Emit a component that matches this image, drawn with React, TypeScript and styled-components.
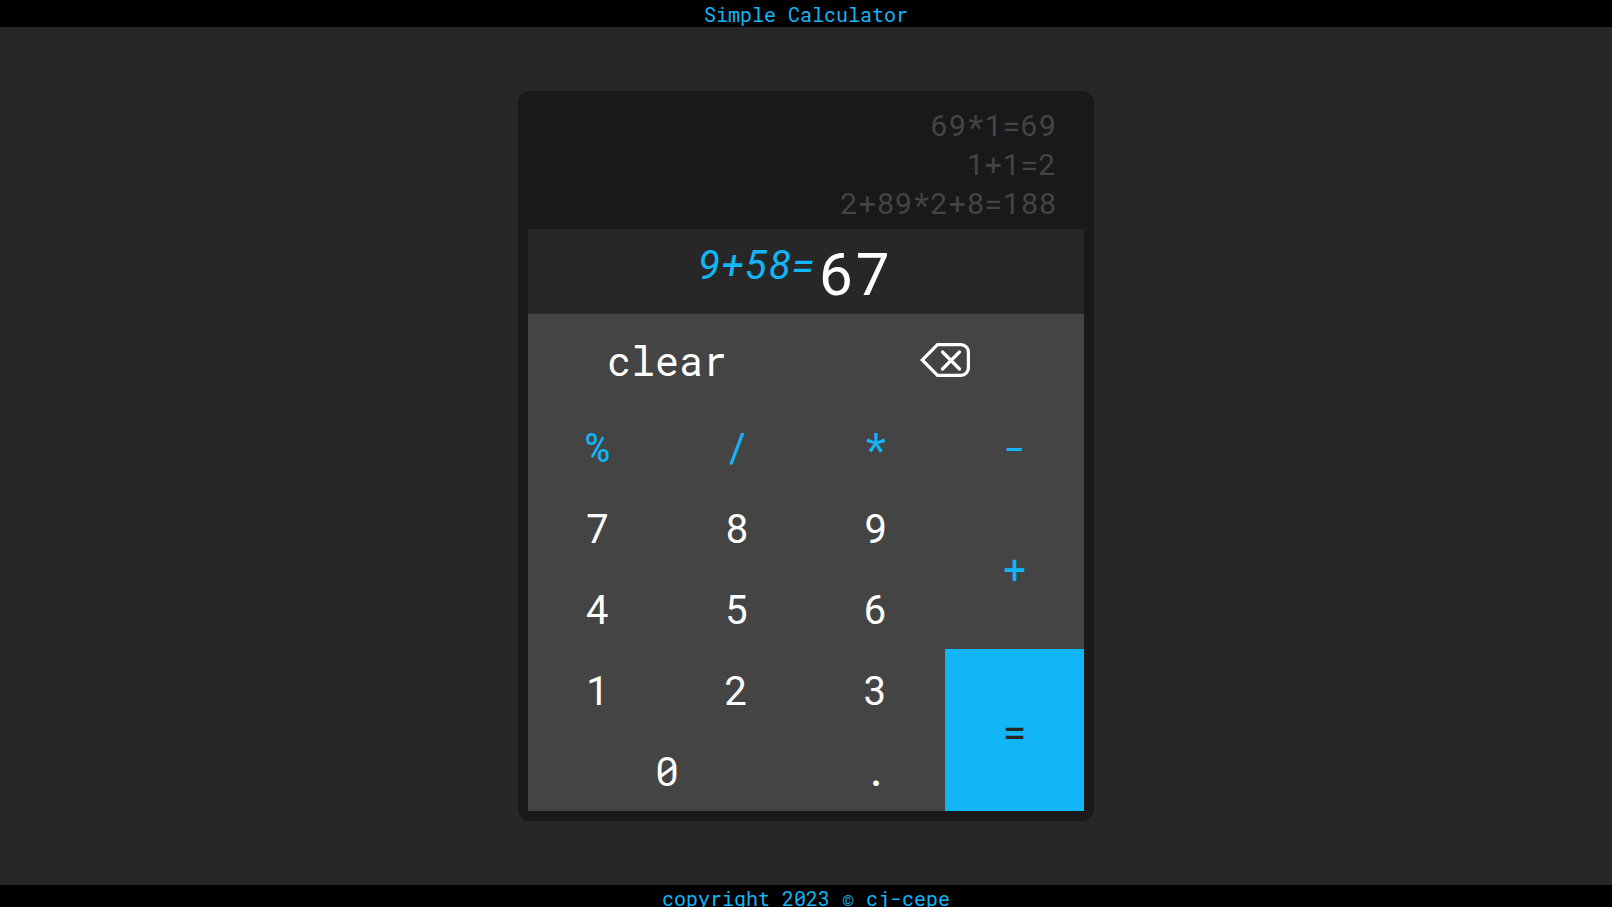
import React, { useState } from "react";
import styled, { createGlobalStyle } from "styled-components";

const GlobalStyle = createGlobalStyle`
  * { box-sizing: border-box; }
  html { scrollbar-width: none; }
  body {
    margin: 0;
    background: #272727;
    color: #fff;
    font-family: "Roboto Mono", Roboto, "Liberation Mono", monospace;
  }
`;

const Bar = styled.div`
  height: 27px;
  background: #000;
  color: #12b5f5;
  text-align: center;
  font-size: 20px;
  line-height: 27px;
`;

const Title = styled.h1`
  margin: 0;
  font: inherit;
  line-height: 28px;
`;

const Main = styled.main`
  display: flex;
  justify-content: center;
  padding: 64px 16px;
`;

const Card = styled.section`
  width: 100%;
  max-width: 576px;
  padding: 10px;
  border-radius: 12px;
  background: #191919;
`;

const History = styled.ul`
  list-style: none;
  margin: 0;
  padding: 4px 5% 7px;
  text-align: right;
  font-size: 30px;
  line-height: 39px;
  color: #444;
`;

const Display = styled.div`
  display: flex;
  justify-content: center;
  align-items: flex-start;
  gap: 4px;
  height: 85px;
  padding: 0 24px 0 0;
  background: #272727;
`;

const Expression = styled.em`
  font-size: 40px;
  line-height: 70px;
  color: #12b5f5;
`;

const Result = styled.output`
  font-size: 60px;
  line-height: 86px;
`;

const Keypad = styled.div`
  display: grid;
  grid-template-columns: repeat(4, 1fr);
  grid-template-rows: 92px repeat(5, 81px);
  background: #444;
`;

type Tone = "plain" | "operator" | "equals";
const tones: Record<Tone, string> = {
  plain: "#fff",
  operator: "#12b5f5",
  equals: "#272727",
};

const Key = styled.button<{ $tone: Tone; $cols: number; $rows: number }>`
  display: flex;
  align-items: center;
  justify-content: center;
  grid-column: span ${(p) => p.$cols};
  grid-row: span ${(p) => p.$rows};
  padding: 0;
  border: 0;
  background: ${(p) => (p.$tone === "equals" ? "#12b5f5" : "transparent")};
  color: ${(p) => tones[p.$tone]};
  font-family: inherit;
  font-size: 40px;
  line-height: 53px;
  cursor: pointer;
`;

const BackspaceIcon = () => (
  <svg width="50" height="34" viewBox="0 0 50 34" fill="none" stroke="#fff" strokeWidth="3.2" aria-hidden="true">
    <path d="M17.5 1.6H41a7.4 7.4 0 0 1 7.4 7.4v16a7.4 7.4 0 0 1-7.4 7.4H17.5L2.2 17z" />
    <path d="M22.5 9l17 17M39.5 9l-17 17" strokeLinecap="round" />
  </svg>
);

type KeySpec = { id: string; tone?: Tone; cols?: number; rows?: number };

const keys: KeySpec[] = [
  { id: "clear", cols: 2 },
  { id: "backspace", cols: 2 },
  { id: "%", tone: "operator" },
  { id: "/", tone: "operator" },
  { id: "*", tone: "operator" },
  { id: "-", tone: "operator" },
  { id: "7" },
  { id: "8" },
  { id: "9" },
  { id: "+", tone: "operator", rows: 2 },
  { id: "4" },
  { id: "5" },
  { id: "6" },
  { id: "1" },
  { id: "2" },
  { id: "3" },
  { id: "=", tone: "equals", rows: 2 },
  { id: "0", cols: 2 },
  { id: "." },
];

function evaluate(source: string): string {
  const parts = source.match(/\d*\.?\d+|[-+*/%]/g) ?? [];
  const sums: number[] = [];
  let op = "+";
  for (const part of parts) {
    if (/^[-+*/%]$/.test(part)) {
      op = part;
      continue;
    }
    const n = Number(part);
    const last = sums.length - 1;
    if (op === "+") sums.push(n);
    else if (op === "-") sums.push(-n);
    else if (last < 0) sums.push(n);
    else if (op === "*") sums[last] *= n;
    else if (op === "/") sums[last] /= n;
    else sums[last] %= n;
  }
  return String(sums.reduce((a, b) => a + b, 0));
}

export default function App() {
  const [history, setHistory] = useState(["69*1=69", "1+1=2", "2+89*2+8=188"]);
  const [expression, setExpression] = useState("9+58=");
  const [value, setValue] = useState("67");

  const press = (id: string) => {
    if (id === "clear") {
      setExpression("");
      setValue("");
    } else if (id === "backspace") {
      setValue(value.slice(0, -1));
    } else if (id === "=") {
      if (expression) setHistory([...history, expression + value].slice(-3));
      setExpression(value + "=");
      setValue(evaluate(value));
    } else {
      setValue(value + id);
    }
  };

  return (
    <>
      <GlobalStyle />
      <Bar as="header">
        <Title>Simple Calculator</Title>
      </Bar>
      <Main>
        <Card aria-label="Calculator">
          <History>
            {history.map((entry, i) => (
              <li key={i}>{entry}</li>
            ))}
          </History>
          <Display>
            <Expression>{expression}</Expression>
            <Result>{value}</Result>
          </Display>
          <Keypad>
            {keys.map(({ id, tone = "plain", cols = 1, rows = 1 }) => (
              <Key
                key={id}
                type="button"
                $tone={tone}
                $cols={cols}
                $rows={rows}
                aria-label={id === "backspace" ? id : undefined}
                onClick={() => press(id)}
              >
                {id === "backspace" ? <BackspaceIcon /> : id}
              </Key>
            ))}
          </Keypad>
        </Card>
      </Main>
      <Bar as="footer">copyright 2023 © cj-cepe</Bar>
    </>
  );
}
